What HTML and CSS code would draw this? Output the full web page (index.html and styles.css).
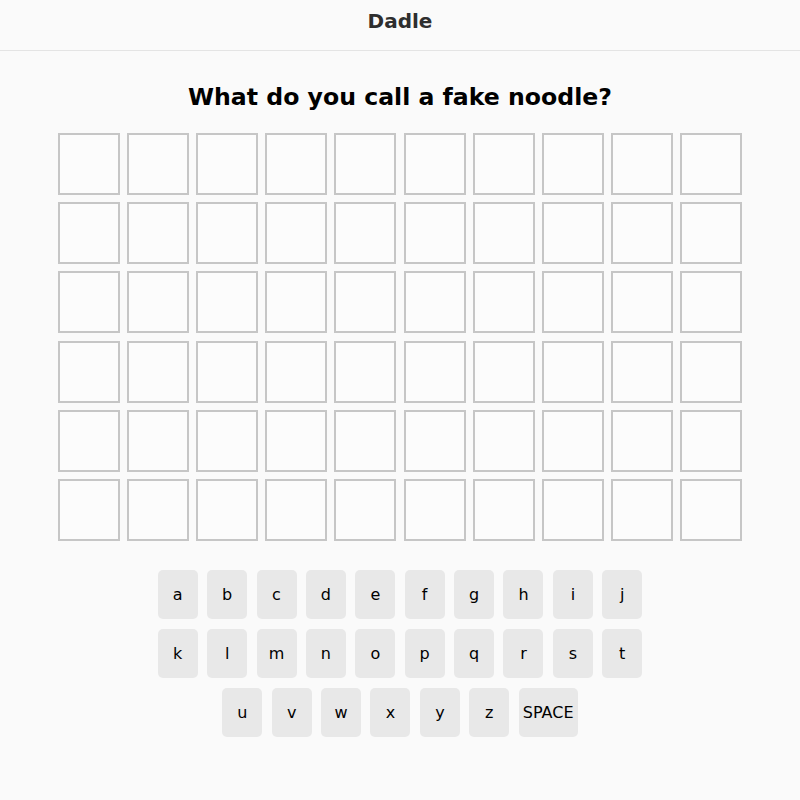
FILE: index.html
```html
<!DOCTYPE html>
<html>
<head>
<meta charset="utf-8">
<link rel="stylesheet" href="styles.css">
</head>
<body>
<header class="header">Dadle</header>
<main class="main">
  <h1 class="question">What do you call a fake noodle?</h1>
  <div class="board">
    <div class="cell"></div><div class="cell"></div><div class="cell"></div><div class="cell"></div><div class="cell"></div><div class="cell"></div><div class="cell"></div><div class="cell"></div><div class="cell"></div><div class="cell"></div>
    <div class="cell"></div><div class="cell"></div><div class="cell"></div><div class="cell"></div><div class="cell"></div><div class="cell"></div><div class="cell"></div><div class="cell"></div><div class="cell"></div><div class="cell"></div>
    <div class="cell"></div><div class="cell"></div><div class="cell"></div><div class="cell"></div><div class="cell"></div><div class="cell"></div><div class="cell"></div><div class="cell"></div><div class="cell"></div><div class="cell"></div>
    <div class="cell"></div><div class="cell"></div><div class="cell"></div><div class="cell"></div><div class="cell"></div><div class="cell"></div><div class="cell"></div><div class="cell"></div><div class="cell"></div><div class="cell"></div>
    <div class="cell"></div><div class="cell"></div><div class="cell"></div><div class="cell"></div><div class="cell"></div><div class="cell"></div><div class="cell"></div><div class="cell"></div><div class="cell"></div><div class="cell"></div>
    <div class="cell"></div><div class="cell"></div><div class="cell"></div><div class="cell"></div><div class="cell"></div><div class="cell"></div><div class="cell"></div><div class="cell"></div><div class="cell"></div><div class="cell"></div>
  </div>
  <div class="keyboard">
    <div class="key-row">
      <button class="key">a</button><button class="key">b</button><button class="key">c</button><button class="key">d</button><button class="key">e</button><button class="key">f</button><button class="key">g</button><button class="key">h</button><button class="key">i</button><button class="key">j</button>
    </div>
    <div class="key-row">
      <button class="key">k</button><button class="key">l</button><button class="key">m</button><button class="key">n</button><button class="key">o</button><button class="key">p</button><button class="key">q</button><button class="key">r</button><button class="key">s</button><button class="key">t</button>
    </div>
    <div class="key-row">
      <button class="key">u</button><button class="key">v</button><button class="key">w</button><button class="key">x</button><button class="key">y</button><button class="key">z</button><button class="key key-wide">SPACE</button>
    </div>
  </div>
</main>
</body>
</html>
```

FILE: styles.css
```css
html, body {
  margin: 0;
  padding: 0;
  background: #fafafa;
  font-family: "DejaVu Sans", Verdana, sans-serif;
}

.header {
  height: 51px;
  border-bottom: 1px solid #e4e4e4;
  display: flex;
  align-items: center;
  justify-content: center;
  font-size: 20px;
  font-weight: bold;
  color: #2e2e2e;
  box-sizing: border-box;
  padding-bottom: 9px;
}

.main {
  display: flex;
  flex-direction: column;
  align-items: center;
}

.question {
  margin: 31px 0 0;
  height: 51px;
  font-size: 23.6px;
  font-weight: bold;
  color: #000;
  line-height: 30px;
}

.board {
  display: grid;
  grid-template-columns: repeat(10, 62px);
  grid-auto-rows: 62px;
  gap: 7.2px 7.1px;
}

.cell {
  border: 2px solid #c6c6c6;
  background: #fcfcfc;
  box-sizing: border-box;
}

.keyboard {
  margin-top: 29px;
  display: flex;
  flex-direction: column;
  align-items: center;
  gap: 10px;
}

.key-row {
  display: flex;
  gap: 9.4px;
}

.key {
  width: 40px;
  height: 49px;
  border: none;
  border-radius: 5px;
  background: #e8e8e8;
  font-family: "DejaVu Sans", Verdana, sans-serif;
  font-size: 16px;
  color: #000;
  padding: 0;
  display: flex;
  align-items: center;
  justify-content: center;
}

.key-wide {
  width: 59px;
}
```
